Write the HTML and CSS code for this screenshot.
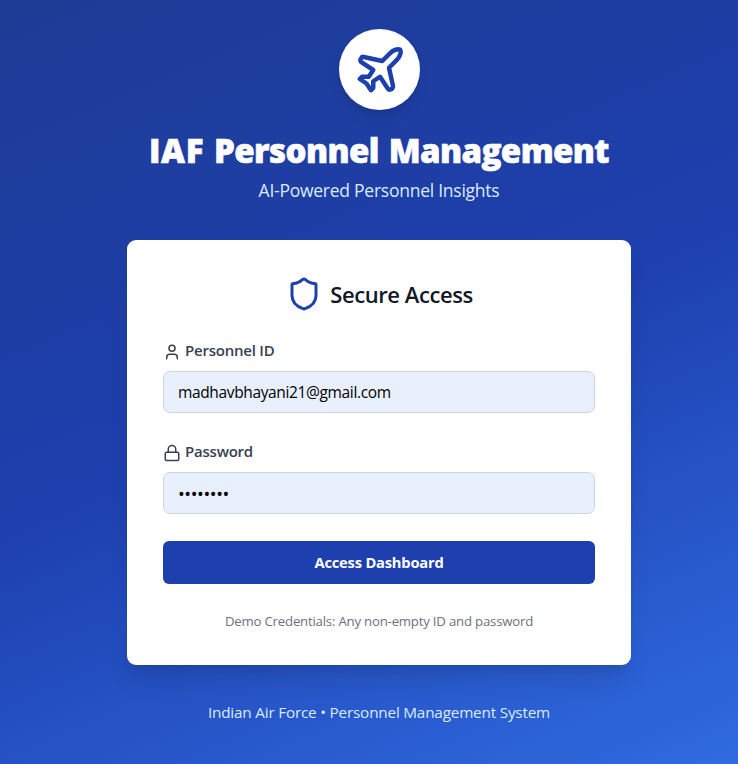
FILE: index.html
```html
<!DOCTYPE html>
<html lang="en">
<head>
<meta charset="utf-8">
<title>IAF Personnel Management</title>
<link rel="stylesheet" href="styles.css">
</head>
<body>
<main class="page">
  <header class="header">
    <div class="logo">
      <svg viewBox="0 0 24 24" class="icon plane"><path d="M17.8 19.2 16 11l3.5-3.5C21 6 21.5 4 21 3c-1-.5-3 0-4.5 1.5L13 8 4.8 6.2c-.5-.1-.9.1-1.1.5l-.3.5c-.2.5-.1 1 .3 1.3L9 12l-2 3H4l-1 1 3 2 2 3 1-1v-3l3-2 3.500 5.300c.3.4.8.5 1.300.3l.5-.2c.4-.3.6-.7.5-1.200z"/></svg>
    </div>
    <h1 class="title"><span class="acronym">IAF</span> Personnel Management</h1>
    <p class="subtitle">AI-Powered Personnel Insights</p>
  </header>
  <form class="card">
    <div class="card-head">
      <svg viewBox="0 0 24 24" class="icon shield"><path d="M20 13c0 5-3.500 7.500-7.660 8.950a1 1 0 0 1-.67-.01C7.500 20.500 4 18 4 13V6a1 1 0 0 1 1-1c2 0 4.500-1.200 6.240-2.720a1.170 1.170 0 0 1 1.520 0C14.510 3.810 17 5 19 5a1 1 0 0 1 1 1z"/></svg>
      <h2 class="card-title">Secure Access</h2>
    </div>
    <label class="label" for="pid">
      <svg viewBox="0 0 24 24" class="icon small"><path d="M19 21v-2a4 4 0 0 0-4-4H9a4 4 0 0 0-4 4v2"/><circle cx="12" cy="7" r="4"/></svg>
      <span>Personnel ID</span>
    </label>
    <input class="field" id="pid" type="text" value="madhavbhayani21@gmail.com">
    <label class="label" for="pw">
      <svg viewBox="0 0 24 24" class="icon small"><rect x="3" y="11" width="18" height="11" rx="2"/><path d="M7 11V7a5 5 0 0 1 10 0v4"/></svg>
      <span>Password</span>
    </label>
    <input class="field password" id="pw" type="text" value="••••••••">
    <button class="submit" type="button">Access Dashboard</button>
    <p class="hint">Demo Credentials: Any non-empty ID and password</p>
  </form>
  <footer class="footer">Indian Air Force • Personnel Management System</footer>
</main>
</body>
</html>
```
FILE: styles.css
```css
* { box-sizing: border-box; margin: 0; }
body { font-family: "Open Sans", "Noto Sans", sans-serif; }
.page {
  height: 764px;
  padding-top: 29px;
  display: flex;
  flex-direction: column;
  align-items: center;
  padding-left: 20px;
  background: linear-gradient(157deg, #1e3a8a -20%, #1e40af 50%, #2f6be0 100%);
  overflow: hidden;
}
.icon { fill: none; stroke: currentColor; stroke-width: 2; stroke-linecap: round; stroke-linejoin: round; flex: none; }
.header { width: 505px; display: flex; flex-direction: column; align-items: center; }
.logo {
  width: 81px; height: 81px; margin-left: 1px; border-radius: 50%;
  background: #fff; color: #1e40af;
  display: flex; align-items: center; justify-content: center;
  box-shadow: 0 10px 15px -3px rgb(0 0 0 / .1), 0 4px 6px -4px rgb(0 0 0 / .1);
}
.plane { width: 54px; height: 54px; }
.title {
  margin-top: 18px; font-size: 33px; line-height: 45px; font-weight: 800; color: #fff;
  letter-spacing: -.6px; word-spacing: 2px; white-space: nowrap; -webkit-text-stroke: .6px #fff;
}
.acronym { letter-spacing: .6px; }
.subtitle { margin-top: 3px; font-size: 17.500px; line-height: 28px; letter-spacing: -.25px; color: #dbeafe; white-space: nowrap; }
.card {
  width: 504px; height: 425px; margin-top: 36px; padding: 36px 36px 32px;
  background: #fff; border-radius: 9px;
  box-shadow: 0 20px 25px -5px rgb(0 0 0 / .1), 0 8px 10px -6px rgb(0 0 0 / .1);
  display: flex; flex-direction: column; flex: none;
}
.card > * { flex: none; }
.card-head { display: flex; align-items: center; justify-content: center; gap: 8px; height: 36px; padding-left: 1px; color: #1e40af; }
.shield { width: 36px; height: 36px; }
.card-title { font-size: 22px; line-height: 36px; font-weight: 600; letter-spacing: -.43px; color: #111827; }
.label { display: flex; align-items: flex-start; gap: 4px; height: 23px; margin-top: 27px; font-size: 15px; line-height: 23px; font-weight: 600; letter-spacing: -.22px; color: #374151; }
.small { width: 18px; height: 18px; margin-top: 4px; }
.field {
  display: block; width: 432px; height: 42px; margin-top: 9px; padding: 0 14px;
  border: 1px solid #d1d5db; border-radius: 7px; background: #e8f0fe;
  font-family: inherit; font-size: 15.500px; letter-spacing: -.36px; color: #000;
}
.password { font-size: 18px; letter-spacing: -.4px; padding-top: 1px; }
.submit {
  height: 43px; margin-top: 27px; padding: 0 0 2px; border: 0; border-radius: 6px;
  background: #1e40af; color: #fff; font: 700 14.700px "Open Sans", sans-serif; letter-spacing: -.2px;
}
.hint { margin-top: 26px; line-height: 22px; font-size: 13.200px; letter-spacing: -.2px; text-align: center; color: #6b7280; }
.footer { margin-top: 35px; line-height: 24px; font-size: 15.300px; letter-spacing: -.2px; color: #dbeafe; }
```
